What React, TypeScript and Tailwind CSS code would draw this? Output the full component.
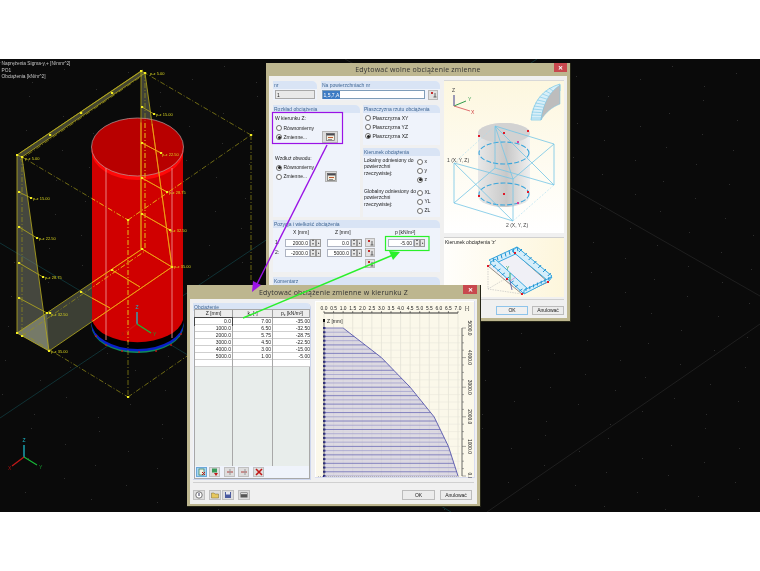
import React from "react";

const sans = "font-['Liberation_Sans',sans-serif]";

type P = [number, number];
const pts = (a: P[]) => a.map((p) => p.join(",")).join(" ");

const solid: [number, number, number, number][] = [
  [17, 155, 141, 71], [22, 157, 145, 73], [20, 153, 143, 70],
  [17, 155, 17, 333], [17, 155, 22, 157], [22, 157, 49, 351], [17, 333, 49, 351],
  [141, 71, 141, 249], [145, 73, 172, 267], [141, 71, 145, 73],
  [17, 333, 142, 249], [49, 351, 172, 267], [142, 249, 172, 267],
  [19, 192, 31, 198], [19, 227, 37, 238], [19, 263, 43, 277], [19, 298, 47, 313],
  [142, 107, 154, 114], [142, 143, 161, 153], [142, 178, 167, 192], [142, 214, 170, 230],
  [81, 292, 110, 308], [112, 270, 140, 287],
];
const dashed: [number, number, number, number][] = [
  [22, 157, 128, 220], [128, 220, 251, 135], [251, 135, 145, 73],
  [22, 157, 22, 333], [145, 73, 145, 251], [128, 220, 128, 397], [251, 135, 251, 282],
  [22, 333, 128, 397], [128, 397, 190, 354], [22, 336, 145, 251],
  [20, 160, 142, 76],
];
const markers: P[] = [
  [141, 71], [145, 73], [17, 155], [22, 157], [112, 93], [81, 113], [50, 135],
  [19, 192], [31, 198], [19, 227], [37, 238], [19, 263], [43, 277], [19, 298], [47, 313], [50, 313],
  [142, 107], [154, 114], [142, 143], [161, 153], [142, 178], [167, 192], [142, 214], [170, 230],
  [142, 249], [172, 267], [49, 351], [17, 333], [22, 336], [81, 292], [112, 270], [128, 397], [128, 220], [251, 135],
];
const labels: [number, number, string][] = [
  [150, 75, "p-z 5.00"], [156, 116, "p-z 15.00"], [162, 156, "p-z 22.50"], [169, 194, "p-z 28.75"],
  [170, 232, "p-z 32.50"], [174, 268, "p-z 35.00"], [25, 160, "p-z 5.00"], [33, 200, "p-z 15.00"],
  [39, 240, "p-z 22.50"], [45, 279, "p-z 28.75"], [51, 316, "p-z 32.50"], [51, 353, "p-z 35.00"],
];

function stars() {
  const out: P[] = [];
  for (let i = 0; i < 24; i++) {
    for (let j = 0; j < 14; j++) {
      const x = i * 32 + ((j * 61) % 32) + ((i * j * 7) % 5);
      const y = 62 + j * 33 + ((i * 19) % 33) + ((i + j * 5) % 4);
      if (y < 510) out.push([x, y]);
    }
  }
  return out;
}

function Scene() {
  return (
    <svg className="absolute left-0 top-[59px]" width={760} height={453} viewBox="0 59 760 453" fontFamily="Liberation Sans, sans-serif">
      <defs>
        <clipPath id="cyl">
          <path d="M92 147 A46 29 0 0 1 183 147 V320 A46 27 0 0 1 92 320 Z" />
        </clipPath>
      </defs>
      {stars().map((s, i) => (
        <rect key={i} x={s[0]} y={s[1]} width={1} height={1} fill="#2e2e2e" />
      ))}
      <line x1={0} y1={243} x2={451} y2={512} stroke="#123c40" strokeWidth={0.8} />
      <line x1={0} y1={418} x2={537} y2={59} stroke="#123c40" strokeWidth={0.8} />
      <line x1={345} y1={59} x2={760} y2={296} stroke="#242424" strokeWidth={0.8} />
      <line x1={760} y1={324} x2={487} y2={512} stroke="#242424" strokeWidth={0.8} />

      <polygon points={pts([[141, 71], [145, 73], [172, 267], [142, 249]])} fill="#5d6050" opacity={0.65} />
      <polygon points={pts([[17, 155], [141, 71], [145, 73], [22, 157]])} fill="#5e6040" opacity={0.7} />
      <polygon points={pts([[17, 333], [142, 249], [172, 267], [49, 351]])} fill="#5d6350" opacity={0.6} />

      <ellipse cx={137.5} cy={326} rx={46} ry={27} fill="#0e8a5a" />
      <ellipse cx={137.5} cy={325} rx={46} ry={26.5} fill="#0a20c8" />
      <ellipse cx={137.5} cy={322} rx={46} ry={27} fill="#000" />
      <path d="M92 147 V320 A46 26 0 0 0 183 320 V147 Z" fill="#d00000" />
      <ellipse cx={137.5} cy={151} rx={46} ry={29} fill="#ff0808" />
      <ellipse cx={137.5} cy={147} rx={46} ry={29} fill="#b80000" stroke="#bda0a0" strokeWidth={0.7} />
      <line x1={106} y1={168} x2={106} y2={340} stroke="#ea8e8e" strokeWidth={0.9} />
      <line x1={172} y1={168} x2={172} y2={338} stroke="#ea8e8e" strokeWidth={0.9} />
      {([[92, 320], [96, 336], [106, 345], [122, 351], [139, 352], [156, 351], [171, 345], [181, 334]] as P[]).map((p, i) => (
        <rect key={i} x={p[0] - 0.7} y={p[1] - 0.7} width={1.5} height={1.5} fill="#e01010" />
      ))}

      <polygon points={pts([[17, 155], [22, 157], [49, 351], [17, 333]])} fill="#7f8472" opacity={0.5} />
      <polygon points={pts([[17, 333], [47, 313], [49, 351]])} fill="#a4a890" opacity={0.35} />

      {solid.map((l, i) => (
        <line key={i} x1={l[0]} y1={l[1]} x2={l[2]} y2={l[3]} stroke="#b8ac1c" strokeWidth={0.8} />
      ))}
      {dashed.map((l, i) => (
        <line key={i} x1={l[0]} y1={l[1]} x2={l[2]} y2={l[3]} stroke="#9a9218" strokeWidth={0.7} strokeDasharray="5 2 1 2" />
      ))}
      <g clipPath="url(#cyl)">
        {solid.map((l, i) => (
          <line key={i} x1={l[0]} y1={l[1]} x2={l[2]} y2={l[3]} stroke="#ff9a12" strokeWidth={0.9} />
        ))}
        {dashed.map((l, i) => (
          <line key={i} x1={l[0]} y1={l[1]} x2={l[2]} y2={l[3]} stroke="#ff9a12" strokeWidth={0.9} strokeDasharray="5 2 1 2" />
        ))}
      </g>
      {markers.map((p, i) => (
        <rect key={i} x={p[0] - 1} y={p[1] - 1} width={2.2} height={2} fill="#f2ec20" />
      ))}
      {labels.map((l, i) => (
        <text key={i} x={l[0]} y={l[1]} fontSize={4} fill="#d8d420">{l[2]}</text>
      ))}

      <g strokeWidth={1.3}>
        <line x1={137} y1={324} x2={137} y2={312} stroke="#1cb8c8" />
        <line x1={137} y1={324} x2={126} y2={332} stroke="#d01010" />
        <line x1={137} y1={324} x2={151} y2={333} stroke="#18b838" />
        <text x={135.5} y={309} fontSize={5} fill="#1cb8c8" stroke="none">Z</text>
        <text x={121} y={336} fontSize={5} fill="#a81010" stroke="none">X</text>
        <text x={153} y={336} fontSize={5} fill="#18a030" stroke="none">Y</text>
        <line x1={24} y1={457} x2={24} y2={445} stroke="#1cb8c8" />
        <line x1={24} y1={457} x2={12} y2={466} stroke="#c01818" />
        <line x1={24} y1={457} x2={37} y2={465} stroke="#18b838" />
        <text x={22.5} y={442} fontSize={5} fill="#1cb8c8" stroke="none">Z</text>
        <text x={8} y={470} fontSize={5} fill="#a81010" stroke="none">X</text>
        <text x={39} y={469} fontSize={5} fill="#18a030" stroke="none">Y</text>
      </g>
    </svg>
  );
}

function Panel({ title, className, children }: { title: string; className: string; children?: React.ReactNode }) {
  return (
    <div className={`flex flex-col bg-[#eff3fb] rounded-tr-[5px] overflow-hidden ${className}`}>
      <div className="h-[8px] shrink-0 bg-[#d9e4f5] text-[#3f6694] text-[5px] leading-[8px] pl-[1px] whitespace-nowrap">{title}</div>
      {children}
    </div>
  );
}

function Radio({ label, on, className }: { label?: string; on?: boolean; className?: string }) {
  return (
    <div className={`flex items-center gap-[1.5px] h-[9px] ${className ?? ""}`}>
      <span className="flex items-center justify-center w-[6px] h-[6px] rounded-full bg-white border-[0.6px] border-[#6e6e6e] shrink-0">
        {on && <span className="block w-[3px] h-[3px] rounded-full bg-[#222]" />}
      </span>
      {label && <span className="whitespace-nowrap">{label}</span>}
    </div>
  );
}

function PickBtn({ className }: { className?: string }) {
  return (
    <span className={`flex items-center justify-center bg-[#dcdcdc] border-[0.6px] border-[#b4b4b4] ${className ?? ""}`}>
      <svg width={9} height={8} viewBox="0 0 9 8">
        <rect x={0.5} y={0.5} width={8} height={7} fill="#f2efe0" stroke="#555" strokeWidth={0.6} />
        <rect x={0.5} y={0.5} width={8} height={2} fill="#4a4a52" />
        <rect x={2} y={4} width={5} height={1} fill="#c05830" />
        <rect x={2} y={6} width={4} height={0.8} fill="#777" />
      </svg>
    </span>
  );
}

function Spin() {
  return (
    <span className="flex shrink-0 h-full">
      <span className="flex flex-col w-[6px] border-[0.5px] border-[#9a9a9a] bg-[#e6e6e6] items-center justify-center text-[3px] leading-[3.5px] text-[#333]">
        <span>▲</span>
        <span>▼</span>
      </span>
      <span className="w-[5px] border-[0.5px] border-[#9a9a9a] bg-[#e6e6e6] text-[3px] leading-[7px] text-center text-[#333]">▸</span>
    </span>
  );
}

function Field({ v, w }: { v: string; w: string }) {
  return (
    <span className={`flex h-[8px] shrink-0 ${w}`}>
      <span className="flex-1 bg-white border-[0.5px] border-[#aeb4c2] text-right pr-[1px] text-[5px] leading-[7px]">{v}</span>
      <Spin />
    </span>
  );
}

function MiniPin({ className }: { className?: string }) {
  return (
    <span className={`flex items-center justify-center bg-[#e0e0e0] border-[0.5px] border-[#b8b8b8] shrink-0 ${className ?? ""}`}>
      <svg width={7} height={7} viewBox="0 0 7 7">
        <path d="M1 1 L3 3 M3 1 L1 3" stroke="#c01818" strokeWidth={0.9} />
        <path d="M5 2 V6 M3.5 6 H6.5" stroke="#444" strokeWidth={0.8} />
      </svg>
    </span>
  );
}

function Close({ className }: { className: string }) {
  return (
    <div className={`absolute top-0 flex items-center justify-center h-[9px] bg-[#c8484e] text-white text-[6px] leading-none font-bold ${className}`}>✕</div>
  );
}

function PreviewTop() {
  const blue = "#74c5e6";
  const hatch: number[] = [];
  for (let i = 0; i < 11; i++) hatch.push(i);
  return (
    <svg className="block" width={119} height={153} viewBox="444 80 119 153" fontFamily="Liberation Sans, sans-serif">
      <defs>
        <linearGradient id="cg" x1="0" x2="1" y1="0" y2="0">
          <stop offset="0" stopColor="#e8e8e8" />
          <stop offset="0.55" stopColor="#c8c8c8" />
          <stop offset="1" stopColor="#f0f0f0" />
        </linearGradient>
      </defs>
      <line x1={454} y1={105} x2={454} y2={94} stroke="#3a3a8a" strokeWidth={1} />
      <line x1={454} y1={105} x2={466} y2={100} stroke="#2f9a4a" strokeWidth={1} />
      <line x1={454} y1={105} x2={470} y2={110} stroke="#e07070" strokeWidth={1} />
      <text x={452} y={91} fontSize={5} fill="#444">Z</text>
      <text x={468} y={100} fontSize={5} fill="#3aa050">Y</text>
      <text x={471} y={113} fontSize={5} fill="#d04040">X</text>

      <path d="M531 119 C533 100 543 88 560 83 V90 C548 94 543 104 541 119 Z" fill="#d8eff8" stroke={blue} strokeWidth={0.7} />
      {hatch.map((i) => {
        const t = i / 10;
        return (
          <line key={i} x1={531 + t * t * 18} y1={117 - t * 30} x2={541 + t * t * 12} y2={117 - t * 27} stroke={blue} strokeWidth={0.6} />
        );
      })}
      <path d="M541 119 C543 104 548 92 560 84 V103 C552 106 545 112 541 119 Z" fill="#bdbdbd" stroke={blue} strokeWidth={0.5} />

      <path d="M478 132 A26 10 0 0 1 530 132 V195 A26 11 0 0 1 478 195 Z" fill="url(#cg)" />
      <ellipse cx={504} cy={132} rx={26} ry={10} fill="#d2d2d2" />
      <ellipse cx={504} cy={152} rx={25} ry={11} fill="none" stroke="#3aa6dc" strokeWidth={1.1} strokeDasharray="5 2" />
      <ellipse cx={504} cy={193} rx={25} ry={11} fill="none" stroke="#3aa6dc" strokeWidth={1.1} strokeDasharray="5 2" />

      <g stroke={blue} strokeWidth={0.8} fill="none">
        <polygon points="495,125 554,143 554,184 495,167" />
        <polygon points="454,162 513,178 513,220 454,202" />
        <line x1={495} y1={125} x2={554} y2={184} />
        <line x1={454} y1={162} x2={513} y2={220} />
        <line x1={495} y1={125} x2={513} y2={178} />
        <line x1={495} y1={167} x2={454} y2={202} />
        <line x1={554} y1={143} x2={513} y2={178} />
      </g>
      <g stroke="#a9dcf0" strokeWidth={0.6} strokeDasharray="2 1.5">
        <line x1={495} y1={125} x2={454} y2={162} />
        <line x1={554} y1={184} x2={513} y2={220} />
      </g>
      {([[504, 132], [479, 135], [528, 130], [518, 141], [504, 193], [479, 195], [528, 191], [518, 202]] as P[]).map((p, i) => (
        <rect key={i} x={p[0] - 1} y={p[1] - 1} width={2} height={2} fill={i % 4 === 3 ? "#d840a0" : "#e01828"} />
      ))}
      <text x={447} y={161} fontSize={5} fill="#444">1 (X, Y, Z)</text>
      <text x={506} y={226} fontSize={5} fill="#444">2 (X, Y, Z)</text>
    </svg>
  );
}

function PreviewBottom() {
  const ticks: number[] = [0, 1, 2, 3, 4, 5, 6];
  return (
    <svg className="absolute left-0 top-0" width={119} height={60} viewBox="444 237 119 60">
      <g stroke="#bbb" strokeWidth={0.6} strokeDasharray="1.5 1" fill="none">
        <polygon points="488,265 488,288 522,293 548,281 515,252" />
        <line x1={515} y1={252} x2={515} y2={272} />
        <line x1={488} y1={288} x2={515} y2={272} />
        <line x1={515} y1={272} x2={548} y2={281} />
      </g>
      <polygon points="488,265 515,252 548,281 522,293" fill="#f0f0f6" stroke="#8a8478" strokeWidth={0.9} />
      <polygon points="489,259 517,246 522,250 494,263" fill="#d6eefa" stroke="#39a8e0" strokeWidth={1} />
      <polygon points="517,246 552,275 547,279 512,250" fill="#d6eefa" stroke="#39a8e0" strokeWidth={1} />
      <polygon points="490,262 495,258 528,288 523,292" fill="#d6eefa" stroke="#39a8e0" strokeWidth={1} />
      <polygon points="524,289 552,276 549,280 524,293" fill="#d6eefa" stroke="#39a8e0" strokeWidth={1} />
      {ticks.map((i) => (
        <g key={i} stroke="#1c90d0" strokeWidth={1}>
          <line x1={493 + i * 4} y1={257 - i * 1.8} x2={494 + i * 4} y2={261 - i * 1.8} />
          <line x1={519 + i * 4.8} y1={251 + i * 4} x2={522 + i * 4.8} y2={248 + i * 4} />
          <line x1={496 + i * 4.4} y1={264 + i * 4} x2={493 + i * 4.4} y2={266 + i * 4} />
          <line x1={526 + i * 3.8} y1={290 - i * 1.8} x2={526 + i * 3.8} y2={287 - i * 1.8} />
        </g>
      ))}
      <line x1={510} y1={280} x2={510} y2={272} stroke="#20a050" strokeWidth={0.9} />
      <line x1={510} y1={280} x2={516} y2={276} stroke="#d080c0" strokeWidth={0.8} />
      <line x1={510} y1={280} x2={512} y2={289} stroke="#5050a0" strokeWidth={0.8} />
      <text x={506} y={269} fontSize={5} fill="#20a050" fontFamily="Liberation Sans, sans-serif">Y</text>
      {([[515, 252], [488, 265], [548, 281], [522, 293], [507, 278]] as P[]).map((p, i) => (
        <rect key={i} x={p[0] - 1} y={p[1] - 1} width={2} height={2} fill="#e01828" />
      ))}
    </svg>
  );
}

function MainDialog() {
  return (
    <div className={`absolute left-[266px] top-[63px] w-[305px] h-[259px] flex flex-col bg-[#bdb68f] border-r border-b border-[#262617] ${sans} text-[5px] leading-[7px] text-[#222]`}>
      <div className="h-[13px] shrink-0 text-center font-['Open_Sans',sans-serif] text-[7px] leading-[14px] tracking-[0.2px] text-[#333]">Edytować wolne obciążenie zmienne</div>
      <Close className="right-[3px] w-[13px]" />
      <div className="flex-1 mx-[3px] mb-[3px] bg-[#f0f0f0] flex gap-[4px] pl-[4px] pt-[4px] overflow-hidden">
        <div className="w-[167px] flex flex-col shrink-0 pt-[1px]">
          <div className="flex gap-[4px] h-[19px] shrink-0">
            <Panel title="nr" className="w-[44px]">
              <div className="mx-[2px] mt-[0.5px] h-[9px] bg-[#e9e9e9] border-[0.5px] border-[#a8a8a8] pl-[1px] leading-[8px]">1</div>
            </Panel>
            <Panel title="Na powierzchniach nr" className="w-[119px]">
              <div className="flex gap-[3px] mx-[1px] mt-[0.5px] h-[9px]">
                <div className="flex-1 bg-white border-[0.5px] border-[#7f9db9]">
                  <span className="bg-[#3d7bc4] text-white px-[0.5px] leading-[8px] inline-block">1,5,7,A</span>
                </div>
                <MiniPin className="w-[10px] h-[10px] mr-[1px]" />
              </div>
            </Panel>
          </div>

          <div className="flex gap-[3px] h-[112px] mt-[5px] shrink-0">
            <Panel title="Rozkład obciążenia" className="w-[87px]">
              <div className="pl-[2px] pr-[22px] pt-[2px]">
                <div className="h-[7px] leading-[7px]">W kierunku Z:</div>
                <div className="mt-[1.5px] pl-[1px]">
                  <Radio label="Równomierny" />
                  <div className="flex items-center justify-between h-[9px]">
                    <Radio label="Zmienne..." on />
                    <PickBtn className="w-[16px] h-[12px] shrink-0" />
                  </div>
                </div>
                <div className="h-[7px] leading-[7px] mt-[13px]">Wzdłuż obwodu:</div>
                <div className="mt-[1.5px] pl-[1px]">
                  <Radio label="Równomierny" on />
                  <div className="flex items-center justify-between h-[9px]">
                    <Radio label="Zmienne..." />
                    <PickBtn className="w-[12px] h-[11px] shrink-0 mr-[1px]" />
                  </div>
                </div>
              </div>
            </Panel>
            <div className="w-[77px] flex flex-col gap-[3px]">
              <Panel title="Płaszczyzna rzutu obciążenia" className="h-[40px]">
                <div className="pl-[2px] pt-[0.5px]">
                  <Radio label="Płaszczyzna XY" />
                  <Radio label="Płaszczyzna YZ" />
                  <Radio label="Płaszczyzna XZ" on />
                </div>
              </Panel>
              <Panel title="Kierunek obciążenia" className="h-[69px]">
                <div className="px-[1px] pt-[1px] flex justify-between">
                  <div className="leading-[6.4px] w-[52px]">Lokalny odniesiony do powierzchni rzeczywistej:</div>
                  <div className="w-[22px] shrink-0">
                    <Radio label="x" />
                    <Radio label="y" />
                    <Radio label="z" on />
                  </div>
                </div>
                <div className="px-[1px] pt-[4px] flex justify-between">
                  <div className="leading-[6.4px] w-[52px]">Globalny odniesiony do powierzchni rzeczywistej:</div>
                  <div className="w-[22px] shrink-0">
                    <Radio label="XL" />
                    <Radio label="YL" />
                    <Radio label="ZL" />
                  </div>
                </div>
              </Panel>
            </div>
          </div>

          <Panel title="Pozycja i wielkość obciążenia" className="h-[52px] mt-[3px] shrink-0">
            <div className="flex h-[9px] items-center">
              <span className="w-[20px] shrink-0" />
              <span className="w-[36px] shrink-0 text-[#222]">X [mm]</span>
              <span className="w-[41px] shrink-0 pl-[6px]">Z [mm]</span>
              <span className="pl-[25px] whitespace-nowrap">p [kN/m²]</span>
            </div>
            <div className="flex items-center h-[8px] mt-[1.5px] pl-[2px]">
              <span className="w-[10px] shrink-0">1:</span>
              <Field v="2000.0" w="w-[36px]" />
              <span className="w-[6px] shrink-0" />
              <Field v="0.0" w="w-[35px]" />
              <span className="w-[3px] shrink-0" />
              <MiniPin className="w-[10px] h-[9px]" />
              <span className="w-[13px] shrink-0" />
              <Field v="-5.00" w="w-[37px]" />
            </div>
            <div className="flex items-center h-[8px] mt-[2px] pl-[2px]">
              <span className="w-[10px] shrink-0">2:</span>
              <Field v="-2000.0" w="w-[36px]" />
              <span className="w-[6px] shrink-0" />
              <Field v="5000.0" w="w-[35px]" />
              <span className="w-[3px] shrink-0" />
              <MiniPin className="w-[10px] h-[9px]" />
            </div>
            <div className="pl-[92px] mt-[2.5px]">
              <MiniPin className="w-[10px] h-[9px]" />
            </div>
          </Panel>
          <Panel title="Komentarz" className="flex-1 mt-[5px]" />
        </div>

        <div className="w-[120px] shrink-0 flex flex-col">
          <div className="h-[153px] shrink-0 bg-linear-to-b from-[#fdf7df] to-[#ffffff] border-t border-[#d8d8d8]">
            <PreviewTop />
          </div>
          <div className="relative h-[60px] shrink-0 mt-[4px] bg-linear-to-r from-[#fffefb] to-[#fdf6dc] border-t border-[#d0d0d0]">
            <PreviewBottom />
            <div className="absolute left-[1px] top-[1px] whitespace-nowrap">Kierunek obciążenia 'z'</div>
          </div>
          <div className="h-px bg-[#cfcfcf] mt-[2px]" />
          <div className="flex justify-end gap-[4px] mt-[6px]">
            <div className="w-[32px] h-[9px] bg-[#f0f0f0] border-[0.8px] border-[#8fc4ea] text-center leading-[7.5px]">OK</div>
            <div className="w-[32px] h-[9px] bg-[#ececec] border-[0.8px] border-[#bcbcbc] text-center leading-[7.5px]">Anulować</div>
          </div>
        </div>
      </div>
    </div>
  );
}

const rows: [string, string, string][] = [
  ["0.0", "7.00", "-35.00"],
  ["1000.0", "6.50", "-32.50"],
  ["2000.0", "5.75", "-28.75"],
  ["3000.0", "4.50", "-22.50"],
  ["4000.0", "3.00", "-15.00"],
  ["5000.0", "1.00", "-5.00"],
  ["", "", ""],
];

function Tool({ children, active, className }: { children: React.ReactNode; active?: boolean; className?: string }) {
  return (
    <span className={`flex items-center justify-center w-[11px] h-[10px] shrink-0 border-[0.6px] ${active ? "bg-[#a8d4f0] border-[#6aa8d8]" : "bg-[#dedede] border-[#c0c0c0]"} ${className ?? ""}`}>
      <svg width={8} height={8} viewBox="0 0 8 8">{children}</svg>
    </span>
  );
}

function ChartSvg() {
  const x0 = 324;
  const sx = 134 / 7;
  const yTop = 328;
  const yBot = 476;
  const curve: P[] = [
    [1, 328], [3, 357.6], [4.5, 387.2], [5.75, 416.8], [6.5, 446.4], [7, 476],
  ];
  const px = (k: number) => x0 + k * sx;
  const edgeAt = (y: number) => {
    for (let i = 0; i < curve.length - 1; i++) {
      const a = curve[i];
      const b = curve[i + 1];
      if (y >= a[1] && y <= b[1]) return px(a[0] + ((b[0] - a[0]) * (y - a[1])) / (b[1] - a[1]));
    }
    return px(7);
  };
  const vTicks: number[] = [];
  for (let i = 0; i <= 14; i++) vTicks.push(i);
  const lines: number[] = [];
  for (let i = 0; i <= 35; i++) lines.push(i);
  const yGrid: number[] = [];
  for (let i = 0; i <= 20; i++) yGrid.push(i);
  const mm: [number, string][] = [[328, "5000.0"], [357.6, "4000.0"], [387.2, "3000.0"], [416.8, "2000.0"], [446.4, "1000.0"], [476, "0.0"]];
  return (
    <svg className="block" width={160} height={177} viewBox="315 301 160 177" fontFamily="Liberation Sans, sans-serif">
      <rect x={316} y={302} width={158} height={175} fill="#fbf8ea" />
      {vTicks.map((i) => (
        <line key={i} x1={px(i * 0.5)} y1={314} x2={px(i * 0.5)} y2={476} stroke="#dedcd0" strokeWidth={0.6} />
      ))}
      {yGrid.map((i) => (
        <line key={i} x1={x0} y1={yTop + i * 7.4} x2={460} y2={yTop + i * 7.4} stroke="#e6e4da" strokeWidth={0.5} />
      ))}
      <polygon points={pts([[x0, yTop], ...curve.map((c) => [px(c[0]), c[1]] as P), [x0, yBot]])} fill="#c9c6dc" opacity={0.6} />
      {lines.map((i) => {
        const y = yTop + (i * (yBot - yTop)) / 35;
        return (
          <g key={i}>
            <line x1={x0} y1={y} x2={edgeAt(y)} y2={y} stroke={i % 2 ? "#9b99cc" : "#5b5bb0"} strokeWidth={0.7} />
            <rect x={x0 - 1} y={y - 1} width={2.4} height={2} fill="#1a1a8c" />
          </g>
        );
      })}
      <polyline points={pts(curve.map((c) => [px(c[0]), c[1]] as P))} fill="none" stroke="#5656ac" strokeWidth={0.9} />
      <line x1={x0} y1={321} x2={x0} y2={476} stroke="#555" strokeWidth={0.8} />
      <rect x={x0 - 1} y={319} width={2} height={3} fill="#111" />
      <text x={327} y={323} fontSize={5} fill="#222">Z [mm]</text>
      <line x1={x0} y1={313} x2={458} y2={313} stroke="#333" strokeWidth={1} />
      {vTicks.map((i) => (
        <g key={i}>
          <line x1={px(i * 0.5)} y1={311} x2={px(i * 0.5)} y2={313} stroke="#333" strokeWidth={0.6} />
          <text x={px(i * 0.5)} y={309.5} fontSize={4.9} fill="#222" textAnchor="middle">{(i * 0.5).toFixed(1)}</text>
        </g>
      ))}
      <text x={465} y={309.5} fontSize={4.9} fill="#222">[-]</text>
      <line x1={462} y1={328} x2={462} y2={476} stroke="#444" strokeWidth={0.8} />
      {yGrid.map((i) => (
        <line key={i} x1={462} y1={yTop + i * 7.4} x2={i % 4 === 0 ? 466 : 464} y2={yTop + i * 7.4} stroke="#555" strokeWidth={0.5} />
      ))}
      {mm.map((m) => (
        <text key={m[1]} x={0} y={0} fontSize={4.9} fill="#222" textAnchor="middle" transform={`translate(467.5 ${m[0]}) rotate(90)`}>{m[1]}</text>
      ))}
      <line x1={318} y1={476.5} x2={460} y2={476.5} stroke="#999" strokeWidth={0.6} strokeDasharray="1 1" />
    </svg>
  );
}

function SubDialog() {
  return (
    <div className={`absolute left-[187px] top-[285px] w-[294px] h-[222px] flex flex-col bg-[#bdb68f] border-r border-b border-[#262617] ${sans} text-[5px] leading-[7px] text-[#222]`}>
      <div className="h-[14px] shrink-0 text-center font-['Open_Sans',sans-serif] text-[7px] leading-[15px] tracking-[0.2px] text-[#333]">Edytować obciążenie zmienne w kierunku Z</div>
      <Close className="right-[3px] w-[14px]" />
      <div className="flex-1 mx-[3px] mb-[2px] bg-[#f0f0f0] flex flex-col overflow-hidden">
        <div className="flex gap-[4px] pl-[3px] pt-[2px] shrink-0">
          <Panel title="Obciążenie" className="w-[118px] h-[177px] mt-[2px] border-r border-b border-[#cdd6ee]">
            <div className="ml-[1px] -mt-[2px] w-[116px] flex-1 flex flex-col bg-[#e8edeb] border-[0.5px] border-[#a8a8a8]">
              <div className="grid grid-cols-[38px_40px_38px] h-[7.5px] bg-[#ececec] border-b-[0.5px] border-[#909090] text-center leading-[7px]">
                <span className="border-r-[0.5px] border-[#a0a0a0]">Z [mm]</span>
                <span className="border-r-[0.5px] border-[#a0a0a0]">k<sub className="text-[3.5px] leading-none">z</sub> [-]</span>
                <span>p<sub className="text-[3.5px] leading-none">z</sub> [kN/m²]</span>
              </div>
              <div className="flex-1 grid grid-cols-[38px_40px_38px]">
                {[0, 1, 2].map((c) => (
                  <div key={c} className={`flex flex-col ${c < 2 ? "border-r-[0.5px] border-[#a8a8a8]" : ""}`}>
                    {rows.map((r, i) => (
                      <div key={i} className={`h-[7px] bg-white border-b-[0.4px] border-[#cfcfcf] text-right pr-[1px] leading-[6.6px] ${c === 0 && i === 0 ? "outline-[0.6px] outline-[#444] -outline-offset-[0.6px]" : ""}`}>{r[c]}</div>
                    ))}
                  </div>
                ))}
              </div>
              <div className="h-[12px] shrink-0 bg-[#eff3fb] flex items-center pl-[1px]">
                <Tool active>
                  <rect x={1} y={1} width={5} height={6} fill="#f0f0e0" stroke="#2a7a5a" strokeWidth={0.7} />
                  <path d="M4 4 L7 7 M7 4 L4 7" stroke="#c01818" strokeWidth={1} />
                </Tool>
                <Tool className="ml-[2px]">
                  <rect x={1} y={0.5} width={5} height={4} fill="#3a9a5a" />
                  <path d="M3 5 L7 5 L5 8 Z" fill="#c01818" />
                </Tool>
                <Tool className="ml-[4px]">
                  <path d="M1 4 H7" stroke="#b04040" strokeWidth={1.2} />
                  <path d="M4 1 V7" stroke="#999" strokeWidth={1} />
                </Tool>
                <Tool className="ml-[3px]">
                  <path d="M1 4 H7" stroke="#b04040" strokeWidth={1.2} />
                  <path d="M5 1 V7" stroke="#999" strokeWidth={1} />
                </Tool>
                <Tool className="ml-[4px]">
                  <path d="M1 1 L7 7 M7 1 L1 7" stroke="#c01818" strokeWidth={1.6} />
                </Tool>
              </div>
            </div>
          </Panel>
          <div className="w-[160px] h-[177px] shrink-0 border-r border-b border-[#d8dcf0] bg-white">
            <ChartSvg />
          </div>
        </div>
        <div className="h-px bg-[#d0d0d0] mt-[2px] mx-[3px]" />
        <div className="flex items-center mt-[7px] pl-[3px]">
          <Tool className="w-[12px]">
            <circle cx={4} cy={4} r={3.2} fill="#fff" stroke="#555" strokeWidth={0.8} />
            <path d="M4 2 V5" stroke="#335" strokeWidth={1} />
          </Tool>
          <Tool className="w-[12px] ml-[4px]">
            <path d="M0.5 2 H3 L4 3 H7.5 V7 H0.5 Z" fill="#e6c860" stroke="#7a6a30" strokeWidth={0.5} />
          </Tool>
          <Tool className="w-[12px] ml-[1px]">
            <rect x={1} y={1} width={6} height={6} fill="#4a5aa0" />
            <rect x={2} y={1} width={4} height={2.5} fill="#e8e8f0" />
          </Tool>
          <Tool className="w-[12px] ml-[4px]">
            <rect x={0.5} y={1.5} width={7} height={5} fill="#555" />
            <rect x={1} y={2} width={6} height={1.2} fill="#ddd" />
          </Tool>
          <div className="flex-1" />
          <div className="w-[33px] h-[9.5px] bg-[#ececec] border-[0.8px] border-[#bcbcbc] text-center leading-[8px]">OK</div>
          <div className="w-[32px] h-[9.5px] ml-[5px] mr-[5px] bg-[#ececec] border-[0.8px] border-[#bcbcbc] text-center leading-[8px]">Anulować</div>
        </div>
      </div>
    </div>
  );
}

function Annotations() {
  const purple = "#9a12e6";
  const green = "#2af02a";
  return (
    <svg className="absolute left-0 top-0 pointer-events-none" width={760} height={571} viewBox="0 0 760 571">
      <rect x={272.5} y={112.5} width={70} height={31} fill="none" stroke={purple} strokeWidth={1.2} />
      <rect x={385.5} y={236.5} width={43.5} height={14} fill="none" stroke={green} strokeWidth={1.2} />
      <line x1={327} y1={145} x2={255} y2={288} stroke={purple} strokeWidth={1.4} />
      <polygon points="252,292 253,281 261,285" fill={purple} />
      <line x1={243} y1={318} x2={393} y2={255} stroke={green} strokeWidth={1.4} />
      <polygon points="400,252 389,251 393,260" fill={green} />
    </svg>
  );
}

export default function App() {
  return (
    <div className={`relative w-[760px] h-[571px] overflow-hidden bg-white ${sans} blur-[0.5px]`}>
      <div className="h-[59px]" />
      <div className="relative h-[453px] bg-[#0a0a0a]">
        <div className="absolute left-[1.5px] top-[2px] text-[4.8px] leading-[6.5px] text-[#c8c8c8] whitespace-pre-line z-10">
          {"Naprężenia Sigma-y,+ [N/mm^2]\nPO1\nObciążenia [kN/m^2]"}
        </div>
      </div>
      <Scene />
      <MainDialog />
      <SubDialog />
      <Annotations />
    </div>
  );
}
